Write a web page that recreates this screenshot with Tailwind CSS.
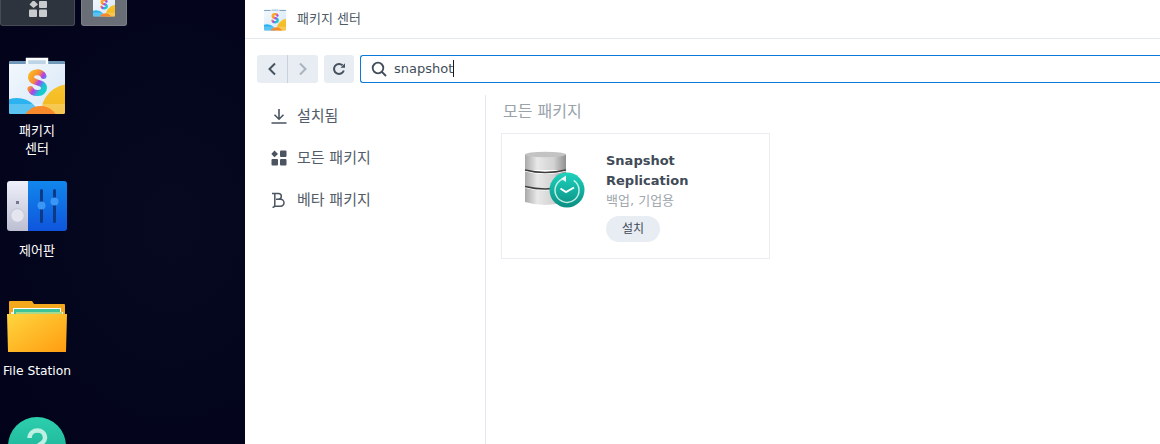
<!DOCTYPE html>
<html lang="ko">
<head>
    <meta charset="UTF-8">
    <title>패키지 센터</title>
    <script src="https://cdn.jsdelivr.net/npm/@tailwindcss/browser@4"></script>
</head>
<body class="w-[1160px] h-[444px] overflow-hidden font-['DejaVu_Sans','Noto_Sans_CJK_KR',sans-serif]">

    <!-- shared package icon -->
    <svg class="block w-0 h-0" width="0" height="0">
        <defs>
            <linearGradient id="pkgBody" x1="0" y1="0" x2="1" y2="1"><stop offset="0" stop-color="#f3f8fd"/><stop offset="1" stop-color="#d6e7f7"/></linearGradient>
            <linearGradient id="pkgSun" x1="0" y1="0" x2="0" y2="1"><stop offset="0" stop-color="#f7c52e"/><stop offset="1" stop-color="#efa80f"/></linearGradient>
            <linearGradient id="pkgS" x1="0" y1="0" x2="1" y2="1"><stop offset="0" stop-color="#fbb61f"/><stop offset=".35" stop-color="#f58c38"/><stop offset=".55" stop-color="#b53cf0"/><stop offset=".8" stop-color="#19c4d6"/><stop offset="1" stop-color="#16d0c0"/></linearGradient>
            <clipPath id="pkgClip"><rect x="9" y="61" width="56" height="53" rx="2"/></clipPath>
            <symbol id="pkgIcon" viewBox="9 57 56 58">
                <g clip-path="url(#pkgClip)">
                    <rect x="9" y="61" width="56" height="53" fill="url(#pkgBody)"/>
                    <rect x="9" y="61" width="56" height="3" fill="#6f98b8"/>
                    <circle cx="70" cy="113" r="29" fill="url(#pkgSun)"/>
                    <circle cx="17" cy="122" r="24" fill="#2cb3ef"/>
                    <rect x="9" y="104" width="56" height="10" fill="#ffffff" fill-opacity=".22"/>
                    <circle cx="40.5" cy="124" r="18" fill="#f98a2c"/>
                </g>
                <path d="M27 64V59H47V64" fill="#bcd5e6" stroke="#ffffff" stroke-width="2.4"/>
                <path d="M43.500 76C42 71 31 71 31 77C31 84 44 81 44 88C44 94 33 95 30.500 89" fill="none" stroke="url(#pkgS)" stroke-width="6" stroke-linecap="round"/>
            </symbol>
        </defs>
    </svg>

    <div class="flex h-[444px]">

        <!-- Desktop -->
        <aside class="w-[245px] h-full shrink-0 overflow-hidden bg-[radial-gradient(ellipse_at_70%_50%,#060920,#02031a)]">
            <div class="flex gap-[6px] h-[26px]">
                <div class="w-[75px] h-[26px] flex justify-center items-end pb-[8px] bg-[#2e343e] border border-t-0 border-[#474c54] rounded-b-[3px]">
                    <svg width="18" height="16" viewBox="0 0 18 16">
                        <path d="M4.500 -1L9 3.500L4.500 7L0.500 3.500Z" fill="#c9cbce"/>
                        <rect x="10" y="0" width="8" height="7" rx="1" fill="#c9cbce"/>
                        <rect x="0" y="8.500" width="8" height="7.500" rx="1" fill="#c9cbce"/>
                        <rect x="10" y="8.500" width="8" height="7.500" rx="1" fill="#c9cbce"/>
                    </svg>
                </div>
                <div class="w-[46px] h-[26px] relative overflow-hidden bg-[#6a6e76] border border-t-0 border-[#7b7f86] rounded-b-[3px]">
                    <svg class="absolute left-[11px] top-[-6px]" width="22" height="23"><use href="#pkgIcon"/></svg>
                </div>
            </div>

            <div class="w-[74px] flex flex-col items-center text-white text-[13px]">
                <svg class="mt-[31px] shrink-0" width="56" height="58"><use href="#pkgIcon"/></svg>
                <div class="mt-[7px] leading-[18px] text-center">패키지<br>센터</div>

                <!-- Control panel -->
                <svg class="mt-[23px] shrink-0" width="60" height="50" viewBox="7 181 60 50">
                    <defs>
                        <clipPath id="cpClip"><rect x="7" y="181" width="60" height="50" rx="3"/></clipPath>
                        <linearGradient id="cpGray" x1="0" y1="0" x2="0" y2="1"><stop offset="0" stop-color="#eef0fa"/><stop offset="1" stop-color="#bcbfd2"/></linearGradient>
                        <linearGradient id="cpBlue" x1="0" y1="0" x2="0" y2="1"><stop offset="0" stop-color="#1187ec"/><stop offset="1" stop-color="#0f55dc"/></linearGradient>
                    </defs>
                    <g clip-path="url(#cpClip)">
                        <rect x="7" y="181" width="21" height="50" fill="url(#cpGray)"/>
                        <rect x="28" y="181" width="39" height="50" fill="url(#cpBlue)"/>
                    </g>
                    <rect x="16" y="201" width="3" height="3" fill="#75788c"/>
                    <circle cx="17.500" cy="215.500" r="6.800" fill="#e4e5ee" stroke="#c5c7d6"/>
                    <rect x="40" y="189" width="3" height="34" rx="1.500" fill="#0c3a86"/>
                    <rect x="53" y="189" width="3" height="34" rx="1.500" fill="#0c3a86"/>
                    <circle cx="41.500" cy="205.500" r="4" fill="#3a97f5"/>
                    <circle cx="54.500" cy="201.500" r="4" fill="#3a97f5"/>
                </svg>
                <div class="mt-[11px] leading-[18px]">제어판</div>

                <!-- File Station folder -->
                <svg class="mt-[41px] shrink-0" width="60" height="52" viewBox="7 300 60 52">
                    <defs>
                        <linearGradient id="fsFront" x1="0" y1="0" x2="1" y2="1"><stop offset="0" stop-color="#ffd63f"/><stop offset="1" stop-color="#ff9c10"/></linearGradient>
                    </defs>
                    <path d="M9 301Q9 300 10 300H32L34 303H64Q65 303 65 304V316H9Z" fill="#f4a81e"/>
                    <rect x="11" y="311" width="52" height="5" fill="#f1f1e2"/>
                    <rect x="13" y="307" width="48" height="6" fill="#ffffff"/>
                    <rect x="14" y="308" width="46" height="5" fill="#3fc49a"/>
                    <rect x="16" y="311" width="46" height="3" fill="#a9d98a"/>
                    <path d="M7 313H67L66 351H8Z" fill="url(#fsFront)"/>
                </svg>
                <div class="mt-[9px] leading-[18px] text-[12.3px] whitespace-nowrap">File Station</div>

                <!-- Help -->
                <svg class="mt-[37px] shrink-0" width="58" height="58" viewBox="8 417 58 58">
                    <defs>
                        <linearGradient id="helpBg" x1="0" y1="0" x2="0" y2="1"><stop offset="0" stop-color="#2dcfae"/><stop offset="1" stop-color="#15a78f"/></linearGradient>
                    </defs>
                    <circle cx="37" cy="446" r="29" fill="url(#helpBg)"/>
                    <path d="M29.500 438C30 428 45 428 45 438C45 442 41 444 38 446" fill="none" stroke="#bdf0e2" stroke-width="4.500"/>
                </svg>
            </div>
        </aside>

        <!-- Package center window -->
        <main class="flex-1 min-w-0 bg-white flex flex-col">
            <header class="h-[39px] shrink-0 flex items-center pl-[19px] gap-[11px] border-b border-[#e4e9ef]">
                <svg class="shrink-0" width="22" height="23"><use href="#pkgIcon"/></svg>
                <span class="text-[13px] text-[#4f5b66]">패키지 센터</span>
            </header>

            <div class="h-[56px] shrink-0 flex items-center pl-[12px] pt-[3px] gap-[6px]">
                <div class="flex w-[61px] h-[28px] bg-[#e8edf4] rounded-[3px]">
                    <div class="w-[31px] flex items-center justify-center border-r border-[#c9d2dd]">
                        <svg width="10" height="14" viewBox="0 0 10 14" fill="none" stroke="#46525e" stroke-width="2"><path d="M8 1.500L2.500 7L8 12.500"/></svg>
                    </div>
                    <div class="flex-1 flex items-center justify-center">
                        <svg width="10" height="14" viewBox="0 0 10 14" fill="none" stroke="#aab3bd" stroke-width="2"><path d="M2 1.500L7.500 7L2 12.500"/></svg>
                    </div>
                </div>
                <div class="w-[30px] h-[28px] bg-[#e8edf4] rounded-[3px] flex items-center justify-center">
                    <svg width="14" height="14" viewBox="0 0 14 14" fill="none">
                        <path d="M11.800 8.500A5 5 0 1 1 10.500 3.300" stroke="#46525e" stroke-width="2"/>
                        <path d="M8.500 5.800H13V1.300Z" fill="#46525e"/>
                    </svg>
                </div>
                <div class="flex-1 h-[28px] flex items-center pl-[10px] border border-[#0a7ada] border-r-0 rounded-l-[3px]">
                    <svg width="16" height="16" viewBox="0 0 16 16" fill="none" stroke="#414d59" stroke-width="1.800">
                        <circle cx="7" cy="7" r="5.300"/><path d="M11 11L15 15"/>
                    </svg>
                    <span class="ml-[7px] text-[13px] text-[#414d59]">snapshot</span>
                    <span class="w-px h-[17px] bg-[#1a1a1a]"></span>
                </div>
            </div>

            <div class="flex-1 min-h-0 flex">
                <nav class="w-[241px] shrink-0 border-r border-[#e4e9ef] flex flex-col pl-[26px] text-[15px] text-[#525d69]">
                    <div class="h-[42px] flex items-center gap-[10px]">
                        <svg class="shrink-0" width="16" height="16" viewBox="0 0 16 16" fill="none" stroke="#4a5561" stroke-width="1.600">
                            <path d="M8 1V11M3.500 6.800L8 11.200L12.500 6.800M0.500 15H15.500"/>
                        </svg>
                        <span>설치됨</span>
                    </div>
                    <div class="h-[42px] flex items-center gap-[10px]">
                        <svg class="shrink-0" width="16" height="16" viewBox="0 0 16 16" fill="#4a5561">
                            <path d="M3.500 0.500L7 4L3.500 7.200L0.300 4Z"/>
                            <rect x="9" y="0.500" width="6.500" height="6.500" rx="1"/>
                            <rect x="0.500" y="9" width="6.500" height="6.500" rx="1"/>
                            <rect x="9" y="9" width="6.500" height="6.500" rx="1"/>
                        </svg>
                        <span>모든 패키지</span>
                    </div>
                    <div class="h-[42px] flex items-center gap-[10px]">
                        <svg class="shrink-0" width="16" height="16" viewBox="0 0 16 16" fill="none" stroke="#4a5561" stroke-width="1.500">
                            <path d="M1 1.500H7.500A2.800 2.800 0 0 1 7.500 7.200H5M7.500 7.200H9.500A3.500 3.500 0 0 1 9.500 14.200H3.800M3.800 1.500V13C3.800 14.500 3 15.300 1.500 15.500"/>
                        </svg>
                        <span>베타 패키지</span>
                    </div>
                </nav>

                <section class="flex-1 pl-[15px]">
                    <h2 class="ml-[2px] h-[38px] pt-[6px] text-base leading-[22px] text-[#9aa2aa]">모든 패키지</h2>
                    <article class="w-[269px] h-[126px] border border-[#e9ecf0] flex">
                        <svg class="ml-[21px] mt-[16px] shrink-0" width="62" height="60" viewBox="523 150 62 60">
                            <defs>
                                <linearGradient id="dbMetal" x1="0" y1="0" x2="1" y2="0"><stop offset="0" stop-color="#a9a9a9"/><stop offset=".3" stop-color="#e8e8e8"/><stop offset=".7" stop-color="#d2d2d2"/><stop offset="1" stop-color="#8f8f8f"/></linearGradient>
                                <linearGradient id="dbTeal" x1="0" y1="0" x2="0" y2="1"><stop offset="0" stop-color="#1dd3bd"/><stop offset="1" stop-color="#0b8f83"/></linearGradient>
                            </defs>
                            <rect x="525" y="154" width="41" height="16" fill="url(#dbMetal)"/>
                            <ellipse cx="545.500" cy="154.500" rx="20.500" ry="2.800" fill="#c3c3c3"/>
                            <path d="M525 170Q545 175 566 170" fill="none" stroke="#3c3c3c" stroke-width="1.500"/>
                            <path d="M525 171.500Q545 176.500 566 171.500V186Q545 191 525 186Z" fill="url(#dbMetal)"/>
                            <path d="M525 186.500Q545 191.500 566 186.500" fill="none" stroke="#3c3c3c" stroke-width="1.500"/>
                            <path d="M525 188Q545 193 566 188V202Q545 208 525 202Z" fill="url(#dbMetal)"/>
                            <circle cx="567" cy="190" r="17.500" fill="url(#dbTeal)"/>
                            <path d="M562 179.500A12 12 0 1 0 571 179" fill="none" stroke="#d6f5ef" stroke-width="1.500" stroke-opacity=".9" transform="rotate(15 567 190)"/>
                            <path d="M566 175.500V182L561 178.800Z" fill="#e6fbf7"/>
                            <path d="M560.500 188.500L566 192L574 187.500" fill="none" stroke="#ffffff" stroke-width="2"/>
                        </svg>
                        <div class="ml-[21px] pt-[17px] flex flex-col items-start">
                            <div class="text-[13px] leading-[20px] font-bold text-[#414b57]">Snapshot<br>Replication</div>
                            <div class="text-[13px] leading-[20px] text-[#a0a7ae]">백업, 기업용</div>
                            <div class="mt-[5px] w-[54px] h-[26px] rounded-full bg-[#e8edf4] text-xs text-[#414b57] flex items-center justify-center">설치</div>
                        </div>
                    </article>
                </section>
            </div>
        </main>
    </div>
</body>
</html>
